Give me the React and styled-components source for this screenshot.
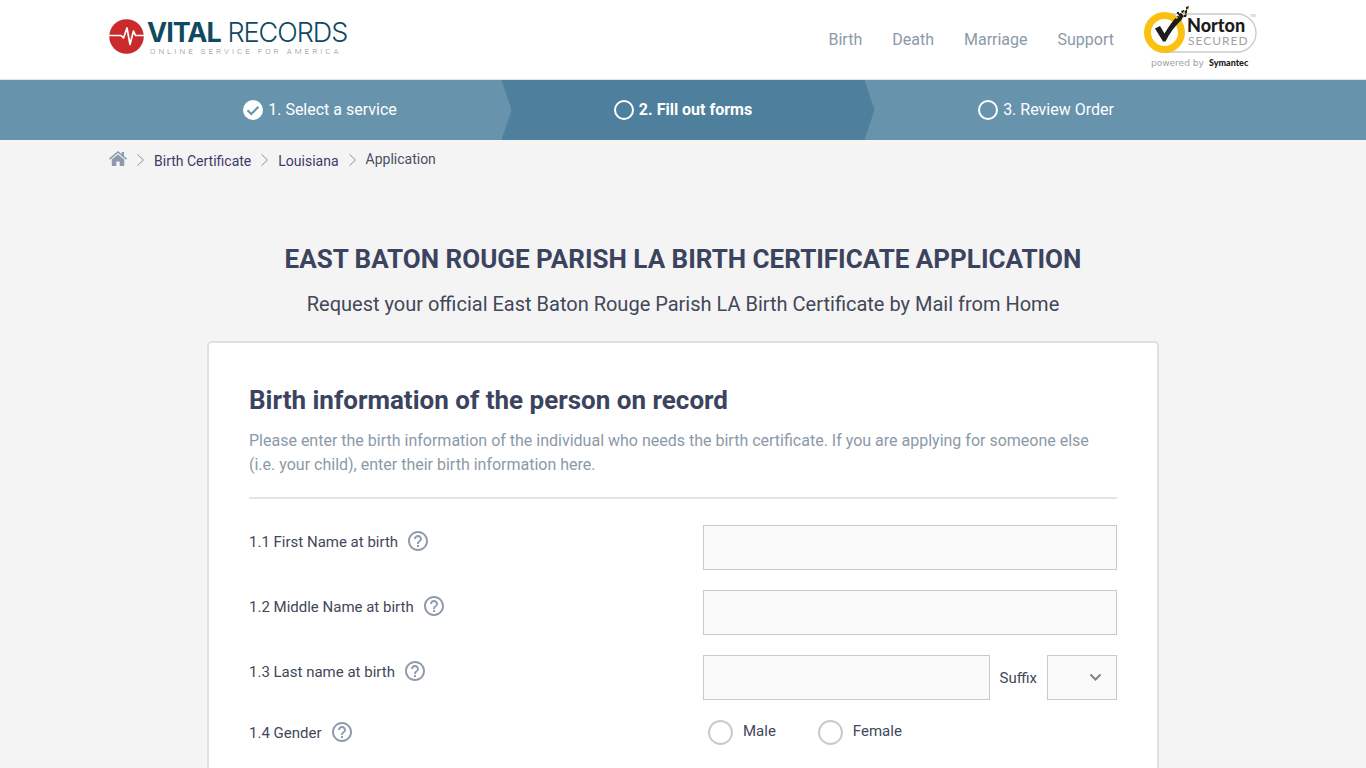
import React from "react";
import styled, { createGlobalStyle, css } from "styled-components";

const GlobalStyle = createGlobalStyle`
  *, *::before, *::after { box-sizing: border-box; }
  body {
    margin: 0;
    background: #f4f4f4;
    color: #424759;
    font-family: Roboto, "Liberation Sans", sans-serif;
    font-size: 15px;
  }
  a { color: inherit; text-decoration: none; }
`;

const Page = styled.div`
  min-height: 100vh;
  display: flex;
  flex-direction: column;
`;

const Container = styled.div`
  width: 100%;
  max-width: 1148px;
  margin: 0 auto;
`;

const Header = styled.header`
  background: #fff;
  border-bottom: 1px solid #dbe6ee;
`;

const HeaderRow = styled(Container)`
  display: flex;
  align-items: center;
  justify-content: space-between;
  height: 79px;
`;

const Logo = styled.a`
  display: flex;
  align-items: center;
  margin-bottom: 6px;
`;

const LogoWords = styled.span`
  display: flex;
  flex-direction: column;
  padding-left: 3px;
`;

const LogoName = styled.span`
  font-family: Inter, "Liberation Sans", sans-serif;
  font-size: 27px;
  line-height: 30px;
  font-weight: 300;
  letter-spacing: -1px;
  color: #0f4a62;
  white-space: nowrap;

  b {
    font-weight: 700;
  }
`;

const LogoTagline = styled.span`
  padding-left: 3px;
  font-size: 8px;
  line-height: 8px;
  font-weight: 300;
  letter-spacing: 3px;
  color: #8f8f8f;
  white-space: nowrap;
`;

const Nav = styled.nav`
  display: flex;
  align-items: center;
  gap: 30px;
  font-size: 16px;
  color: #8b9aa8;

  svg {
    display: block;
  }
`;

const Steps = styled.div`
  background: #6893ac;
`;

const StepList = styled.ol`
  display: grid;
  grid-template-columns: repeat(3, 1fr);
  max-width: 1089px;
  margin: 0 auto;
  padding: 0;
  list-style: none;
`;

const Step = styled.li`
  position: relative;
  display: flex;
  align-items: center;
  justify-content: center;
  gap: 5px;
  height: 60px;
  font-size: 16px;
  color: #fff;
  background: ${(p) => (p.$active ? "#4e809e" : "#6893ac")};
  font-weight: ${(p) => (p.$active ? 700 : 400)};

  ${(p) =>
    !p.$last &&
    css`
      &::after {
        content: "";
        position: absolute;
        z-index: 1;
        top: 0;
        left: 100%;
        width: 10px;
        height: 100%;
        background: inherit;
        clip-path: polygon(0 0, 100% 50%, 0 100%);
      }
    `}
`;

const StepText = styled.span`
  padding-bottom: 2px;
`;

const Breadcrumbs = styled(Container).attrs({ as: "nav" })`
  display: flex;
  align-items: center;
  gap: 10px;
  height: 40px;
  font-size: 14px;
  color: #3c3a66;
`;

const Crumb = styled.a`
  padding-top: 2px;
`;

const Current = styled.span`
  padding-bottom: 2px;
  color: #4a4f63;
`;

const Title = styled.h1`
  margin: 64px 0 0;
  font-size: 26px;
  line-height: 30px;
  font-weight: 700;
  color: #3b435e;
  text-align: center;
`;

const Subtitle = styled.p`
  margin: 18px 0 25px;
  font-size: 20px;
  line-height: 24px;
  text-align: center;
`;

const Card = styled.form`
  flex: 1;
  width: 100%;
  max-width: 952px;
  margin: 0 auto;
  padding: 42px 40px 20px;
  background: #fff;
  border: 2px solid #dfe0e3;
  border-bottom: 0;
  border-radius: 5px 5px 0 0;
`;

const CardTitle = styled.h2`
  margin: 0;
  font-size: 26px;
  line-height: 30px;
  font-weight: 700;
  color: #3b435e;
`;

const CardText = styled.p`
  margin: 14px 0 20px;
  font-size: 16px;
  line-height: 24px;
  color: #8b9aa8;
`;

const Divider = styled.hr`
  margin: 0 0 26px;
  border: 0;
  border-top: 2px solid #e4e5e7;
`;

const Fields = styled.div`
  display: grid;
  gap: 20px;
`;

const Row = styled.div`
  display: grid;
  grid-template-columns: 1fr 414px;
  align-items: start;
`;

const LabelCell = styled.div`
  display: flex;
  align-items: center;
  gap: 8px;
  padding-top: ${(p) => (p.$flush ? 0 : 4)}px;
`;

const LabelText = styled.label`
  padding-top: 2px;
`;

const HelpButton = styled.button`
  display: flex;
  padding: 0;
  border: 0;
  background: none;
  color: #8f9bab;
  cursor: pointer;
`;

const Controls = styled.div`
  display: flex;
  align-items: center;
  gap: 10px;
`;

const boxed = css`
  height: 45px;
  border: 1px solid #c8c9cb;
  border-radius: 0;
  background-color: #fafafa;
  color: inherit;
  font: inherit;
`;

const TextInput = styled.input`
  ${boxed}
  flex: 1;
  min-width: 0;
  padding: 0 10px;
`;

const SelectWrap = styled.div`
  position: relative;
  width: 70px;

  svg {
    position: absolute;
    top: 18px;
    right: 15px;
    pointer-events: none;
  }
`;

const Select = styled.select`
  ${boxed}
  display: block;
  width: 100%;
  padding: 0 10px;
  appearance: none;
`;

const Radios = styled.div`
  display: flex;
  gap: 42px;
  padding-left: 5px;
`;

const RadioLabel = styled.label`
  display: flex;
  align-items: center;
  gap: 10px;
  line-height: 22px;
`;

const RadioInput = styled.input`
  width: 25px;
  height: 25px;
  margin: 0;
  appearance: none;
  border: 2px solid #c9cacc;
  border-radius: 50%;
  background: #fff;

  &:checked {
    background: radial-gradient(#4e809e 45%, #fff 50%);
  }
`;

const RadioText = styled.span`
  padding-bottom: 3px;
`;

function PulseMark() {
  return (
    <svg width="35" height="35" viewBox="0 0 35 35" aria-hidden="true">
      <circle cx="17.5" cy="17.5" r="17.3" fill="#cb2a2d" />
      <path
        d="M0 16.500H12L14.500 19 18 9l3 16.500L24.500 12l2 4.500H35"
        fill="none"
        stroke="#fff"
        strokeWidth="1.7"
        strokeLinejoin="round"
      />
    </svg>
  );
}

function NortonSeal() {
  return (
    <svg width="113" height="79" viewBox="0 0 113 79" role="img" aria-label="Norton Secured, powered by Symantec">
      <path d="M20 14h73a18.500 18.500 0 0 1 0 38H20" fill="#fff" stroke="#c9cacb" strokeWidth="1.300" />
      <circle cx="20.500" cy="32.500" r="17" fill="#fff" stroke="#fbc111" strokeWidth="7" />
      <path d="M11 28.500l5-2.500 4.500 7.500C25 26 29 20.500 34 15.500l4 4C31 26 25.500 33 21.500 41.500h-2.500z" fill="#1c1c1a" />
      <path
        d="M34 14l3-1 3 3-3 4zM37 11l3-1 1 2-3 1zM41 11l2-2v4l-2 1zM40 15l3-1-1 3h-2zM42 7l3-1-1 3h-2zM33 12h2v2h-2z"
        fill="#1c1c1a"
      />
      <path d="M39 12l2-1v2l-2 1zM43 9l2-1-1 3zM31 17l2-1 1 2-2 1zM38 18l2-1-1 2z" fill="#fbc111" />
      <text x="43" y="32" fontFamily="Lato, sans-serif" fontSize="18" fontWeight="900" fill="#1c1c1a">Norton</text>
      <text x="44" y="45" fontFamily="Lato, sans-serif" fontSize="12" letterSpacing="1" fill="#a0a1a2">SECURED</text>
      <text x="106" y="17" fontFamily="Open Sans, sans-serif" fontSize="4" fill="#a8a9aa">TM</text>
      <text x="7" y="66" fontFamily="DejaVu Sans, sans-serif" fontSize="9" fill="#a0a1a2">powered by</text>
      <text x="65" y="66" fontFamily="Lato, sans-serif" fontSize="9" fontWeight="900" fill="#1c1c1a">Symantec</text>
    </svg>
  );
}

function StepIcon({ done }) {
  return (
    <svg width="20" height="20" viewBox="0 0 20 20" aria-hidden="true">
      <circle cx="10" cy="10" r="9" fill={done ? "#fff" : "none"} stroke="#fff" strokeWidth="2" />
      {done && <path d="M4.500 10.200l3.800 3.800 7.200-7.300" fill="none" stroke="#6893ac" strokeWidth="2" />}
    </svg>
  );
}

function HomeIcon() {
  return (
    <svg width="18" height="15" viewBox="0 0 18 15" fill="#8b9bad" role="img" aria-label="Home">
      <path d="M9 0L0 7.500l1 1.200 8-6.700 8 6.700 1-1.200-3-2.500V1h-2.300v2.200z" />
      <path d="M9 3.400L2.800 8.600V15h4.500v-4.500h3.400V15h4.500V8.600z" />
    </svg>
  );
}

function Separator() {
  return (
    <svg width="7" height="12" viewBox="0 0 7 12" fill="none" stroke="#8d949c" aria-hidden="true">
      <path d="M0.500 0.500l6 5.500-6 5.500" />
    </svg>
  );
}

function Help({ topic }) {
  return (
    <HelpButton type="button" aria-label={`Help: ${topic}`}>
      <svg width="24" height="24" viewBox="0 0 24 24" fill="currentColor" aria-hidden="true">
        <path d="M11 18h2v-2h-2v2zm1-16C6.480 2 2 6.480 2 12s4.480 10 10 10 10-4.480 10-10S17.520 2 12 2zm0 18c-4.410 0-8-3.590-8-8s3.590-8 8-8 8 3.590 8 8-3.590 8-8 8zm0-14c-2.210 0-4 1.790-4 4h2c0-1.100.9-2 2-2s2 .9 2 2c0 2-3 1.750-3 5h2c0-2.250 3-2.500 3-5 0-2.210-1.790-4-4-4z" />
      </svg>
    </HelpButton>
  );
}

function Field({ id, label, children }) {
  return (
    <Row>
      <LabelCell>
        <LabelText htmlFor={id}>{label}</LabelText>
        <Help topic={label} />
      </LabelCell>
      <Controls>
        <TextInput id={id} type="text" />
        {children}
      </Controls>
    </Row>
  );
}

export default function App() {
  return (
    <Page>
      <GlobalStyle />
      <Header>
        <HeaderRow>
          <Logo href="#">
            <PulseMark />
            <LogoWords>
              <LogoName>
                <b>VITAL</b> RECORDS
              </LogoName>
              <LogoTagline>ONLINE SERVICE FOR AMERICA</LogoTagline>
            </LogoWords>
          </Logo>
          <Nav>
            <a href="#birth">Birth</a>
            <a href="#death">Death</a>
            <a href="#marriage">Marriage</a>
            <a href="#support">Support</a>
            <NortonSeal />
          </Nav>
        </HeaderRow>
      </Header>

      <Steps>
        <StepList>
          <Step>
            <StepIcon done />
            <StepText>1. Select a service</StepText>
          </Step>
          <Step $active aria-current="step">
            <StepIcon />
            <StepText>2. Fill out forms</StepText>
          </Step>
          <Step $last>
            <StepIcon />
            <StepText>3. Review Order</StepText>
          </Step>
        </StepList>
      </Steps>

      <Breadcrumbs aria-label="Breadcrumb">
        <a href="#home">
          <HomeIcon />
        </a>
        <Separator />
        <Crumb href="#birth">Birth Certificate</Crumb>
        <Separator />
        <Crumb href="#louisiana">Louisiana</Crumb>
        <Separator />
        <Current>Application</Current>
      </Breadcrumbs>

      <Title>EAST BATON ROUGE PARISH LA BIRTH CERTIFICATE APPLICATION</Title>
      <Subtitle>Request your official East Baton Rouge Parish LA Birth Certificate by Mail from Home</Subtitle>

      <Card>
        <CardTitle>Birth information of the person on record</CardTitle>
        <CardText>
          Please enter the birth information of the individual who needs the birth certificate. If you are applying for
          someone else (i.e. your child), enter their birth information here.
        </CardText>
        <Divider />
        <Fields>
          <Field id="first-name" label="1.1 First Name at birth" />
          <Field id="middle-name" label="1.2 Middle Name at birth" />
          <Field id="last-name" label="1.3 Last name at birth">
            <label htmlFor="suffix">Suffix</label>
            <SelectWrap>
              <Select id="suffix" defaultValue="">
                <option value=""></option>
              </Select>
              <svg width="13" height="9" viewBox="0 0 13 9" fill="none" stroke="#7d838b" strokeWidth="2" aria-hidden="true">
                <path d="M1.500 1.500l5 5 5-5" />
              </svg>
            </SelectWrap>
          </Field>
          <Row role="radiogroup" aria-labelledby="gender-label">
            <LabelCell $flush>
              <LabelText as="span" id="gender-label">
                1.4 Gender
              </LabelText>
              <Help topic="1.4 Gender" />
            </LabelCell>
            <Radios>
              <RadioLabel>
                <RadioInput type="radio" name="gender" value="male" />
                <RadioText>Male</RadioText>
              </RadioLabel>
              <RadioLabel>
                <RadioInput type="radio" name="gender" value="female" />
                <RadioText>Female</RadioText>
              </RadioLabel>
            </Radios>
          </Row>
        </Fields>
      </Card>
    </Page>
  );
}
